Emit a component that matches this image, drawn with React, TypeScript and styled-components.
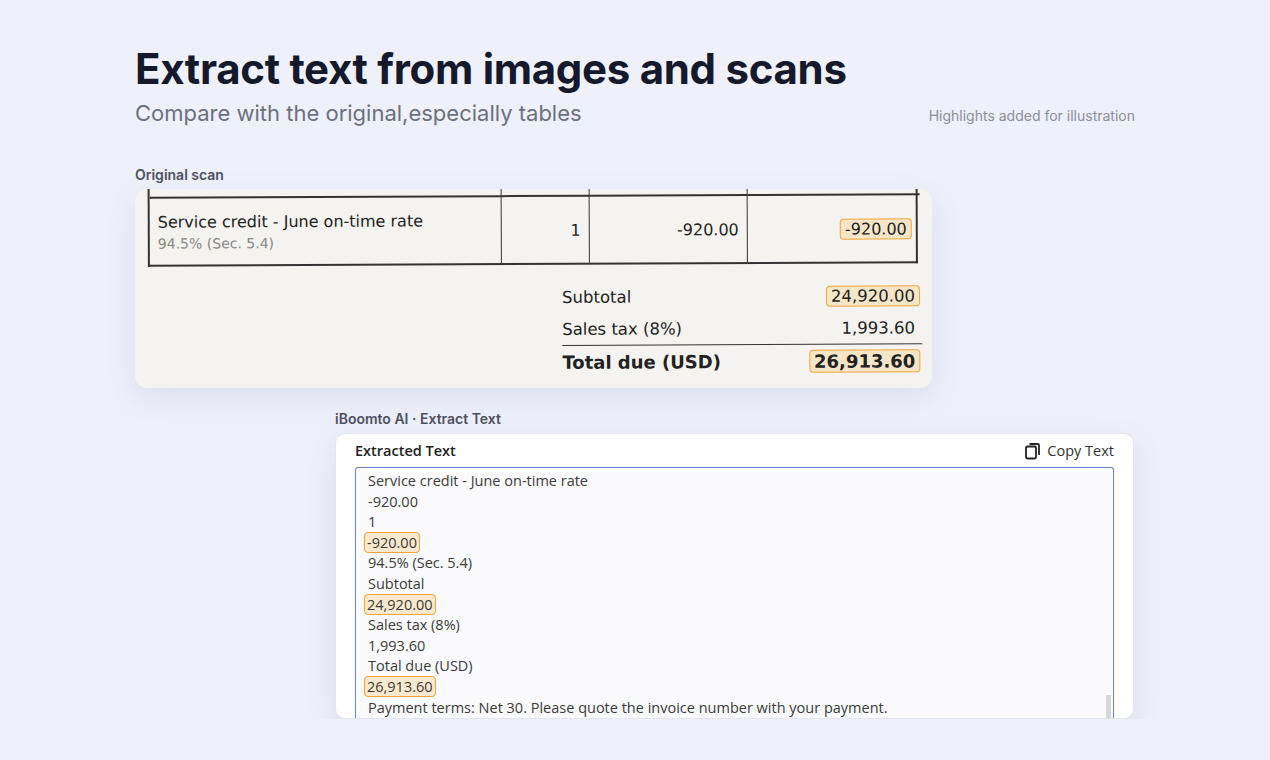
import React from 'react';
import styled, { createGlobalStyle } from 'styled-components';

const GlobalStyle = createGlobalStyle`
  body {
    margin: 0;
    background: #eef0fa;
    font-family: Inter, "Noto Sans", sans-serif;
  }
`;

const Page = styled.div`
  width: 1000px;
  margin: 0 auto;
  padding-top: 44px;
`;

const Title = styled.h1`
  margin: 0;
  font-size: 42px;
  font-weight: 700;
  color: #141a2b;
  letter-spacing: -0.3px;
  line-height: 50px;
`;

const SubRow = styled.div`
  display: flex;
  justify-content: space-between;
  align-items: baseline;
  margin-top: 4px;
`;

const Subtitle = styled.p`
  margin: 0;
  font-size: 22px;
  color: #6b7080;
  line-height: 30px;
`;

const Note = styled.span`
  font-size: 14px;
  color: #8a8f9c;
`;

const Label = styled.div<{ $indent?: number }>`
  font-size: 14px;
  font-weight: 600;
  color: #4d5262;
  margin: ${(p) => (p.$indent ? '22px' : '38px')} 0 6px ${(p) => p.$indent ?? 0}px;
`;

const ScanCard = styled.div`
  width: 797px;
  height: 199px;
  background: #f4f3ef;
  border-radius: 12px;
  box-shadow: 0 10px 30px rgba(90, 100, 150, 0.12);
  overflow: hidden;
  font-family: "DejaVu Sans", sans-serif;
  color: #222;
`;

const ScanInner = styled.div`
  transform: rotate(-0.25deg);
  padding: 0 14px 0 13px;
`;

const Table = styled.div`
  display: grid;
  grid-template-columns: 352px 88px 158px 172px;
  border: 2px solid #333;
  border-top: none;
  margin-top: -4px;
`;

const Cell = styled.div<{ $right?: boolean; $h: number; $last?: boolean }>`
  height: ${(p) => p.$h}px;
  border-right: ${(p) => (p.$last ? 'none' : '1.5px solid #333')};
  display: flex;
  flex-direction: column;
  justify-content: center;
  align-items: ${(p) => (p.$right ? 'flex-end' : 'flex-start')};
  padding: 0 8px;
  font-size: 16px;
`;

const TopCell = styled(Cell)`
  border-bottom: 2px solid #333;
`;

const Muted = styled.span`
  font-size: 14px;
  color: #888;
  margin-top: 4px;
`;

const Mark = styled.span<{ $bold?: boolean }>`
  border: 1.5px solid #f0a43a;
  background: #f6e6c8;
  border-radius: 4px;
  padding: 0 4px;
  font-weight: ${(p) => (p.$bold ? 700 : 400)};
`;

const Totals = styled.div`
  margin: 16px 0 0 414px;
  width: 360px;
`;

const TotalRow = styled.div<{ $bold?: boolean; $rule?: boolean }>`
  display: flex;
  justify-content: space-between;
  align-items: center;
  height: 32px;
  font-size: ${(p) => (p.$bold ? '18px' : '16.5px')};
  font-weight: ${(p) => (p.$bold ? 700 : 400)};
  border-top: ${(p) => (p.$rule ? '1.5px solid #333' : 'none')};
  padding-right: 2px;
`;

const Tool = styled.div`
  margin-left: 200px;
  width: 799px;
  height: 286px;
  background: #fff;
  border-radius: 10px;
  box-shadow: 0 10px 30px rgba(90, 100, 150, 0.12);
  border: 1px solid #e4e6ef;
  box-sizing: border-box;
  padding: 0 19px;
  overflow: hidden;
  font-family: "Open Sans", "Noto Sans", sans-serif;
`;

const ToolHead = styled.div`
  display: flex;
  justify-content: space-between;
  align-items: center;
  height: 33px;
  font-size: 14.5px;
  color: #222;
`;

const HeadTitle = styled.span`
  font-weight: 600;
`;

const CopyBtn = styled.span`
  display: flex;
  align-items: center;
  gap: 5px;
  color: #333;
`;

const TextBox = styled.div`
  border: 1px solid #6f7fdc;
  border-bottom: none;
  border-radius: 3px 3px 0 0;
  height: 260px;
  background: #fbfbfd;
  padding: 3px 12px 0;
  position: relative;
  font-size: 14.5px;
  color: #3a3a3a;
  line-height: 20.6px;
`;

const Line = styled.div``;

const BoxMark = styled.span`
  border: 1.5px solid #f0a43a;
  background: #fbe9cf;
  border-radius: 4px;
  padding: 0 2px;
  margin-left: -4px;
`;

const Scrollbar = styled.div`
  position: absolute;
  right: 2px;
  bottom: 0;
  width: 5px;
  height: 36px;
  background: #d6d6d6;
`;

const lines: (string | [string])[] = [
  'Service credit - June on-time rate',
  '-920.00',
  '1',
  ['-920.00'],
  '94.5% (Sec. 5.4)',
  'Subtotal',
  ['24,920.00'],
  'Sales tax (8%)',
  '1,993.60',
  'Total due (USD)',
  ['26,913.60'],
  'Payment terms: Net 30. Please quote the invoice number with your payment.',
];

export default function App() {
  return (
    <>
      <GlobalStyle />
      <Page>
        <Title>Extract text from images and scans</Title>
        <SubRow>
          <Subtitle>Compare with the original,especially tables</Subtitle>
          <Note>Highlights added for illustration</Note>
        </SubRow>
        <Label>Original scan</Label>
        <ScanCard>
          <ScanInner>
            <Table>
              <TopCell $h={10} />
              <TopCell $h={10} />
              <TopCell $h={10} />
              <TopCell $h={10} $last />
              <Cell $h={66}>
                Service credit - June on-time rate
                <Muted>94.5% (Sec. 5.4)</Muted>
              </Cell>
              <Cell $h={66} $right>1</Cell>
              <Cell $h={66} $right>-920.00</Cell>
              <Cell $h={66} $right $last>
                <Mark>-920.00</Mark>
              </Cell>
            </Table>
            <Totals>
              <TotalRow>
                <span>Subtotal</span>
                <Mark>24,920.00</Mark>
              </TotalRow>
              <TotalRow>
                <span>Sales tax (8%)</span>
                <span>1,993.60&nbsp;</span>
              </TotalRow>
              <TotalRow $bold $rule>
                <span>Total due (USD)</span>
                <Mark $bold>26,913.60</Mark>
              </TotalRow>
            </Totals>
          </ScanInner>
        </ScanCard>
        <Label $indent={200}>iBoomto AI · Extract Text</Label>
        <Tool>
          <ToolHead>
            <HeadTitle>Extracted Text</HeadTitle>
            <CopyBtn>
              <svg width="18" height="18" viewBox="0 0 18 18" fill="none" stroke="#222" strokeWidth="1.8">
                <rect x="2" y="4.5" width="10" height="12" rx="1.5" />
                <path d="M5.5 2h8a1.5 1.5 0 0 1 1.5 1.5V13" />
              </svg>
              Copy Text
            </CopyBtn>
          </ToolHead>
          <TextBox>
            {lines.map((l, i) => (
              <Line key={i}>{Array.isArray(l) ? <BoxMark>{l[0]}</BoxMark> : l}</Line>
            ))}
            <Scrollbar />
          </TextBox>
        </Tool>
      </Page>
    </>
  );
}
